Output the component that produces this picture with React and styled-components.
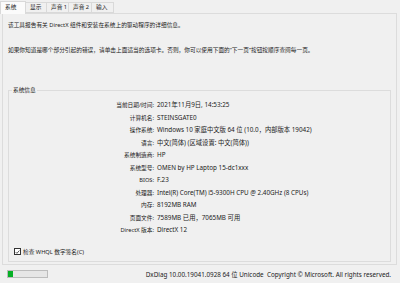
import React from 'react'
import styled, { createGlobalStyle } from 'styled-components'

const Global = createGlobalStyle`
  html, body {
    margin: 0;
    padding: 0;
    background: #f0f0f0;
  }
  * {
    box-sizing: border-box;
  }
`

const Window = styled.div`
  width: 400px;
  height: 283px;
  background: #f0f0f0;
  display: flex;
  flex-direction: column;
  font-family: "Noto Sans", "Noto Sans CJK SC", sans-serif;
  font-size: 5.7px;
  color: #1b1b1b;
  overflow: hidden;
`

const TabBar = styled.div`
  display: flex;
  align-items: flex-end;
  height: 13px;
  position: relative;
  z-index: 1;
`

const Tab = styled.div`
  width: ${p => p.w}px;
  height: ${p => (p.active ? 13 : 11)}px;
  padding-left: 4px;
  display: flex;
  align-items: center;
  background: ${p => (p.active ? '#fbfbfb' : '#f0f0f0')};
  border: 1px solid #d9d9d9;
  border-bottom: ${p => (p.active ? 'none' : '1px solid #d9d9d9')};
  margin-left: ${p => (p.first ? 0 : -1)}px;
  margin-bottom: ${p => (p.active ? -1 : 0)}px;
  line-height: 1;
`

const Panel = styled.div`
  margin: 0 3px 0 2px;
  height: 252px;
  border: 1px solid #dcdcdc;
  padding: 6px 5px 0 5px;
  display: flex;
  flex-direction: column;
`

const Intro = styled.div`
  line-height: 10px;
  height: 10px;
  white-space: nowrap;
  margin-top: ${p => p.gap || 0}px;
`

const Group = styled.fieldset`
  margin: 32px 0 0 0;
  padding: 6px 0 0 0;
  border: 1px solid #dcdcdc;
  height: 175px;
  display: flex;
  flex-direction: column;
  min-width: 0;
`

const Legend = styled.legend`
  padding: 0 1px;
  margin-left: 3px;
  line-height: 6px;
`

const Row = styled.div`
  display: grid;
  grid-template-columns: 145px 1fr;
  column-gap: 3px;
  height: 12.5px;
  line-height: 12.5px;
  white-space: nowrap;
`

const Label = styled.span`
  text-align: right;
`

const Value = styled.span`
  font-size: 6.3px;
`

const CheckRow = styled.label`
  display: flex;
  align-items: center;
  gap: 2px;
  margin: 11px 0 0 5px;
  line-height: 8px;
`

const Box = styled.span`
  width: 7px;
  height: 7px;
  border: 1px solid #333;
  background: #fff;
  display: flex;
  align-items: center;
  justify-content: center;
`

const Footer = styled.div`
  flex: 1;
  display: flex;
  align-items: center;
  padding: 0 9px 0 7px;
  justify-content: space-between;
`

const Progress = styled.div`
  width: 41px;
  height: 8px;
  border: 1px solid #bcbcbc;
  background: #e6e6e6;
  display: flex;
`

const Fill = styled.div`
  background: #06b025;
  height: 100%;
`

const Version = styled.span`
  white-space: pre;
  font-size: 6.3px;
`

const rows = [
  ['当前日期/时间', '2021年11月9日, 14:53:25'],
  ['计算机名', 'STEINSGATE0'],
  ['操作系统', 'Windows 10 家庭中文版 64 位 (10.0，内部版本 19042)'],
  ['语言', '中文(简体) (区域设置: 中文(简体))'],
  ['系统制造商', 'HP'],
  ['系统型号', 'OMEN by HP Laptop 15-dc1xxx'],
  ['BIOS', 'F.23'],
  ['处理器', 'Intel(R) Core(TM) i5-9300H CPU @ 2.40GHz (8 CPUs)'],
  ['内存', '8192MB RAM'],
  ['页面文件', '7589MB 已用，7065MB 可用'],
  ['DirectX 版本', 'DirectX 12'],
]

const tabs = [
  ['系统', 26],
  ['显示', 22],
  ['声音 1', 23],
  ['声音 2', 24],
  ['输入', 23],
]

const App = () => {
  return (
    <Window>
      <Global />
      <TabBar>
        {tabs.map(([t, w], i) => (
          <Tab key={t} w={w} first={i === 0} active={i === 0}>{t}</Tab>
        ))}
      </TabBar>
      <Panel>
        <Intro>该工具报告有关 DirectX 组件和安装在系统上的驱动程序的详细信息。</Intro>
        <Intro gap={15}>如果你知道是哪个部分引起的错误，请单击上面适当的选项卡。否则，你可以使用下面的“下一页”按钮按顺序查阅每一页。</Intro>
        <Group>
          <Legend>系统信息</Legend>
          {rows.map(([l, v]) => (
            <Row key={l}>
              <Label>{l}:</Label>
              <Value>{v}</Value>
            </Row>
          ))}
          <CheckRow>
            <Box>
              <svg width="6" height="6" viewBox="0 0 6 6">
                <path d="M0.8 3.1 L2.3 4.6 L5.3 1.2" fill="none" stroke="#222" strokeWidth="0.9" />
              </svg>
            </Box>
            检查 WHQL 数字签名(C)
          </CheckRow>
        </Group>
      </Panel>
      <Footer>
        <Progress>
          <Fill style={{ width: '12%' }} />
        </Progress>
        <Version>DxDiag 10.00.19041.0928 64 位 Unicode  Copyright © Microsoft. All rights reserved.</Version>
      </Footer>
    </Window>
  )
}

export default App
